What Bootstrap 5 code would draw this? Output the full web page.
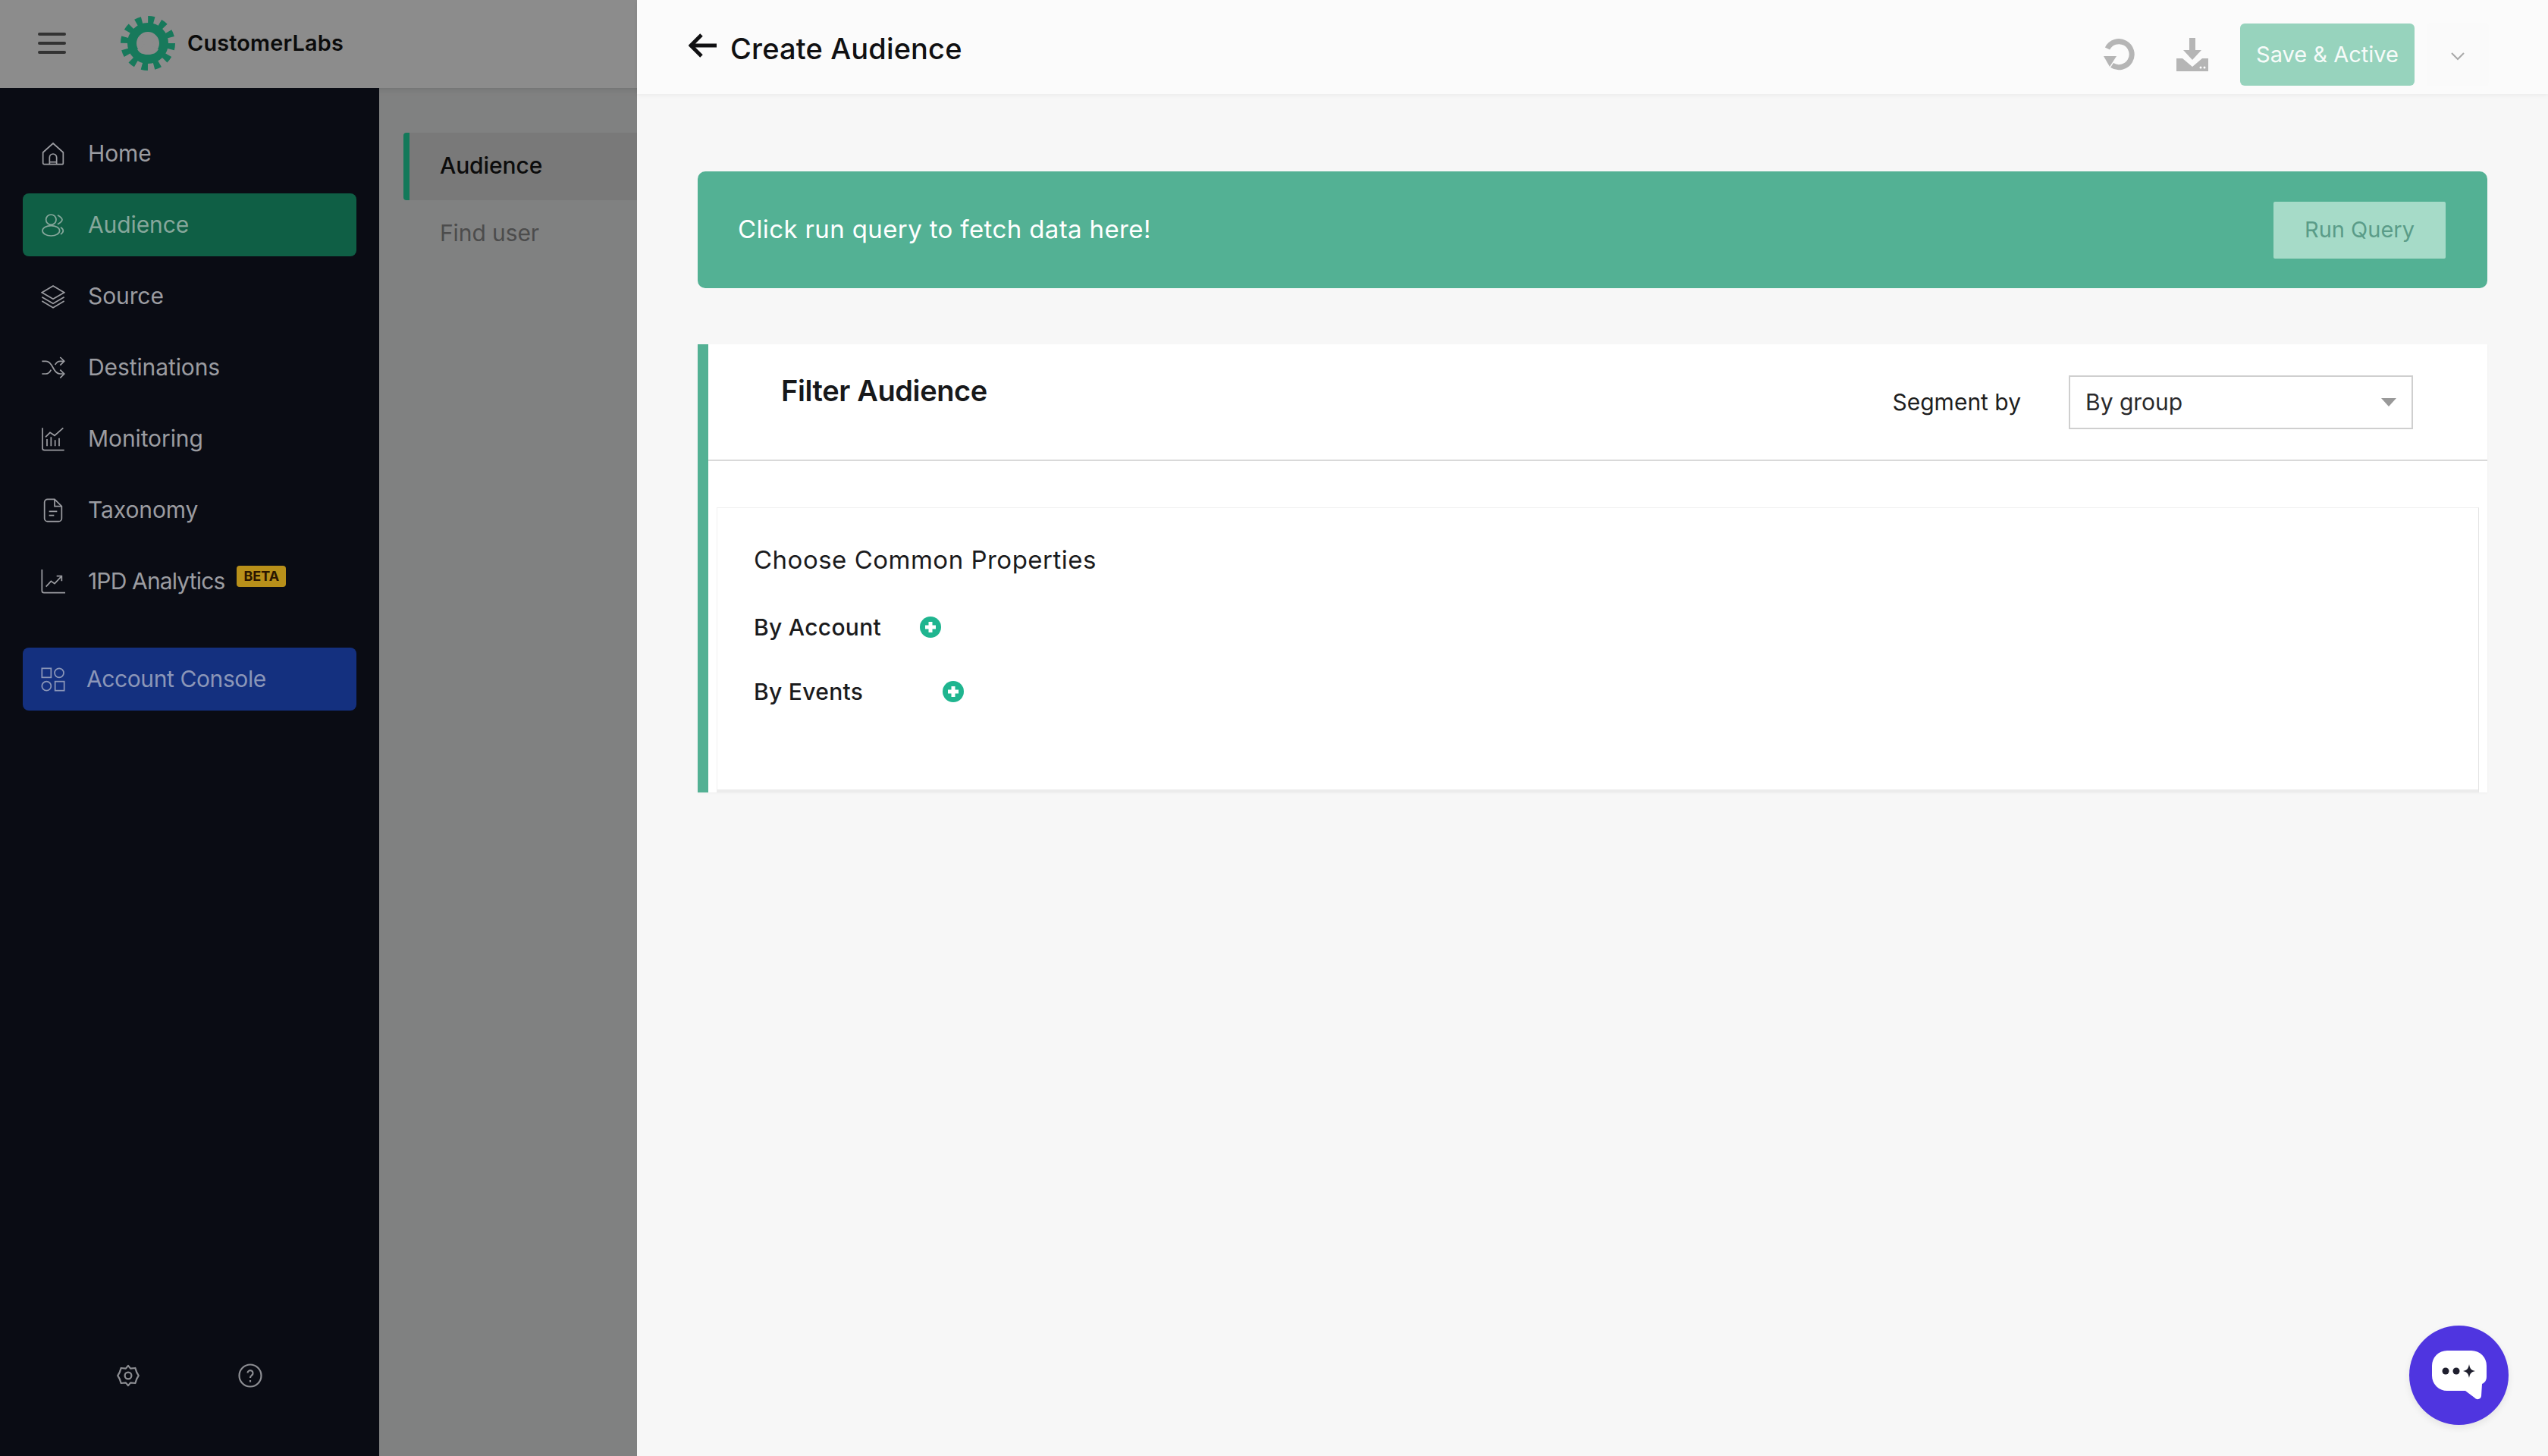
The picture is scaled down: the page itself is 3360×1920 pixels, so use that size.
<!DOCTYPE html>
<html lang="en">
<head>
    <meta charset="UTF-8">
    <meta name="viewport" content="width=device-width, initial-scale=1.0">
    <title>Create Audience</title>

    <link href="https://cdn.jsdelivr.net/npm/bootstrap@5.3.0/dist/css/bootstrap.min.css" rel="stylesheet">

    <style>
        html, body { height: 100%; }
        body {
            font-family: "Inter", "Liberation Sans", sans-serif;
            background: #f7f7f7;
            color: #1c1c1f;
            overflow: hidden;
        }
        .app { width: 3360px; height: 1920px; }
        .left-col { width: 840px; flex: none; }
        .brand-bar { height: 116px; background: #8c8c8c; padding: 0 0 3px 50px; }
        .burger { width: 37px; gap: 8px; }
        .burger span { display: block; height: 4px; border-radius: 2px; background: #333; }
        .logo { margin-left: 72px; }
        .brand-name { margin-left: 16px; font-size: 28.800px; font-weight: 600; color: #0b0b0b; letter-spacing: .2px; }

        .sidebar { width: 500px; flex: none; background: #0a0c14; padding: 45px 30px 90px; }
        .side-link {
            height: 83px;
            margin-bottom: 11px;
            padding: 0 0 0 24px;
            gap: 30px;
            border-radius: 8px;
            color: #9b9ca1;
            font-size: 30px;
            letter-spacing: -.1px;
        }
        .side-link svg { width: 32px; height: 32px; flex: none; }
        .side-link.active { background: #0f5f45; color: #86a79b; }
        .side-link.console { background: #14307f; color: #8b96b8; margin-top: 35px; letter-spacing: -.4px; gap: 28px; }
        .side-link.analytics { letter-spacing: -.85px; }
        .beta {
            margin: -14px 0 0 -14px;
            padding: 3px 9px;
            background: #b8901a;
            color: #2a1500;
            font-size: 18px;
            font-weight: 700;
            line-height: 22px;
            border-radius: 4px;
            letter-spacing: 0;
        }
        .side-foot { gap: 130px; color: #8d8e93; }

        .subnav { background: #808181; padding-top: 59px; box-shadow: inset 0 10px 8px -10px #6b6b6b; }
        .sub-link { height: 89px; padding: 0 0 2px 80px; font-size: 30px; color: #4c4c4c; letter-spacing: -.1px; }
        .sub-link.active { margin-left: 32px; background: #797979; border-left: 8px solid #13795a; padding-left: 40px; color: #0c0c0c; font-weight: 500; border-radius: 4px 0 0 4px; }

        .topbar { height: 124px; background: #fbfbfb; box-shadow: 0 2px 6px rgba(0,0,0,.05); padding: 0 78px 0 68px; }
        .back-arrow { margin-bottom: 4px; }
        .page-title { font-size: 38px; font-weight: 500; color: #101012; margin: 4px 0 0 17px; letter-spacing: .15px; }
        .top-tools { margin-top: 20px; }
        .btn-save {
            width: 230px; height: 82px;
            margin-left: 42px;
            background: #97d3bd;
            border: 0;
            border-radius: 6px;
            color: #f6fbf9;
            font-size: 29px;
        }
        .btn-more { width: 82px; height: 84px; margin-left: 16px; background: #fafafa; border: 0; padding: 0; }
        .tool { margin-left: 55px; }

        .content { padding: 102px 80px 0; }
        .banner { height: 154px; background: #53b194; border-radius: 10px; padding: 0 55px 0 53px; color: #fff; font-size: 33px; letter-spacing: .37px; }
        .btn-run {
            width: 227px; height: 75px;
            background: #a6dbc8;
            border: 0;
            border-radius: 2px;
            color: #5a9c88;
            font-size: 29px;
        }
        .filter-card {
            height: 591px;
            margin-top: 74px;
            border: 0;
            border-left: 14px solid #53b194;
            border-radius: 0;
            background: #fff;
            box-shadow: 0 1px 3px rgba(0,0,0,.04);
        }
        .filter-head { height: 155px; border-bottom: 2px solid #d9d9d9; padding: 0 98px 0 96px; }
        .filter-title { font-size: 38px; font-weight: 600; color: #17181a; margin: 38px 0 0; line-height: 46px; letter-spacing: -.4px; }
        .segment-label { font-size: 30px; color: #1e1e20; margin-right: 63px; }
        .form-select.segment {
            width: 454px; height: 71px;
            border: 2px solid #cfcfcf;
            border-radius: 0;
            padding: 0 20px;
            font-size: 30px;
            color: #2a2a2c;
            background-image: url("data:image/svg+xml,%3csvg xmlns='http://www.w3.org/2000/svg' viewBox='0 0 20 11'%3e%3cpath fill='%23999' d='M0 0h20L10 11z'/%3e%3c/svg%3e");
            background-position: right 20px center;
            background-size: 20px 11px;
        }
        .props {
            height: 377px;
            margin: 61px 11px 0 11px;
            padding: 41px 0 0 48px;
            border: 1px solid #f0f0f0;
            border-right-color: #e4e4e4;
            border-bottom: 4px solid #ececec;
        }
        .props h6 { font-size: 33px; font-weight: 400; line-height: 54px; margin: 0 0 35px; color: #1b1b1d; letter-spacing: .5px; }
        .prop-row { height: 54px; margin-bottom: 31px; font-size: 30px; font-weight: 500; color: #1b1b1d; letter-spacing: .3px; }
        .prop-row svg { width: 28px; height: 28px; }
        .prop-account { width: 219px; }
        .prop-events { width: 249px; }

        .chat {
            position: fixed;
            left: 3177px; top: 1748px;
            width: 131px; height: 131px;
            background: #4f35e0;
            box-shadow: 0 4px 10px rgba(0,0,0,.08);
        }
    </style>
</head>
<body>

<div class="app d-flex">

    <div class="left-col d-flex flex-column">
        <div class="brand-bar d-flex align-items-center">
            <div class="burger d-flex flex-column"><span></span><span></span><span></span></div>
            <svg class="logo" width="72" height="72" viewBox="-36 -36 72 72">
                <circle r="29.5" fill="none" stroke="#17795b" stroke-width="13" stroke-dasharray="7.7 7.74"/>
                <circle r="21" fill="none" stroke="#17795b" stroke-width="12"/>
                <circle cy="-5" r="8" fill="#8c8c8c"/>
                <path d="M-4-2h8l1 5 9 5c-3 5-7 7-14 7s-11-2-14-7l9-5Z" fill="#8c8c8c"/>
            </svg>
            <span class="brand-name">CustomerLabs</span>
        </div>

        <div class="d-flex flex-grow-1">
            <nav class="sidebar d-flex flex-column">
                <a class="side-link d-flex align-items-center text-decoration-none">
                    <svg viewBox="0 0 24 24" fill="none" stroke="currentColor" stroke-width="1.3"><path d="M2 10.5 12 1.5l10 9V21a1.3 1.3 0 0 1-1.3 1.3H3.3A1.3 1.3 0 0 1 2 21Z"/><path d="M8.5 22v-6.5a3.5 3.5 0 0 1 7 0V22"/><path d="M8.5 20h7"/></svg>
                    Home
                </a>
                <a class="side-link active d-flex align-items-center text-decoration-none">
                    <svg viewBox="0 0 24 24" fill="none" stroke="currentColor" stroke-width="1.3"><circle cx="10" cy="6.5" r="5"/><ellipse cx="10" cy="17.5" rx="8.5" ry="5"/><path d="M16.5 2c2.5 1.5 4.5 3 4.5 4.5S19 9.500 16.500 11"/><path d="M19.500 14c1.500 1 2.500 2.300 2.500 3.500s-1 2.500-2.500 3.500"/></svg>
                    Audience
                </a>
                <a class="side-link d-flex align-items-center text-decoration-none">
                    <svg viewBox="0 0 24 24" fill="none" stroke="currentColor" stroke-width="1.3"><path d="M12 1.500 23 8 12 14.500 1 8Z"/><path d="M1 12.500 12 19 23 12.500"/><path d="M1 16.500 12 23 23 16.500"/></svg>
                    Source
                </a>
                <a class="side-link d-flex align-items-center text-decoration-none">
                    <svg viewBox="0 0 24 24" fill="none" stroke="currentColor" stroke-width="1.3"><path d="M1 5.500h4c3.500 0 5.500 3.500 7 6.500s3.500 6 7 6h4"/><path d="M1 18h4c2.500 0 4-2 5-4M14 9c1-1.800 2.800-3.500 5-3.500h4"/><path d="M19 1.500 23 5.500 19 9.500M19 14 23 18 19 22"/></svg>
                    Destinations
                </a>
                <a class="side-link d-flex align-items-center text-decoration-none">
                    <svg viewBox="0 0 24 24" fill="none" stroke="currentColor" stroke-width="1.3"><path d="M1.500 1v20a2 2 0 0 0 2 2H23"/><path d="M6 19v-7M10 19v-9M14 19v-6M18 19v-8"/><path d="M4.500 10 9 5.500l4.500 3L22 1"/></svg>
                    Monitoring
                </a>
                <a class="side-link d-flex align-items-center text-decoration-none">
                    <svg viewBox="0 0 24 24" fill="none" stroke="currentColor" stroke-width="1.3"><path d="M13.500 1H6.500a3 3 0 0 0-3 3v16a3 3 0 0 0 3 3h11a3 3 0 0 0 3-3V8Z"/><path d="M13.500 1v7h7"/><path d="M8 13h8M8 17h5"/></svg>
                    Taxonomy
                </a>
                <a class="side-link analytics d-flex align-items-center text-decoration-none">
                    <svg viewBox="0 0 24 24" fill="none" stroke="currentColor" stroke-width="1.3"><path d="M1 0v21a2 2 0 0 0 2 2h21"/><path d="M5 17 10 11.500l3.500 2.500 6.500-7"/><path d="M15.500 6.500h5v5"/></svg>
                    1PD Analytics
                    <span class="beta">BETA</span>
                </a>
                <a class="side-link console d-flex align-items-center text-decoration-none">
                    <svg viewBox="0 0 24 24" fill="none" stroke="currentColor" stroke-width="1.3"><rect x="1" y="1" width="9" height="9"/><circle cx="18" cy="5.500" r="4.500"/><circle cx="5.500" cy="18.500" r="4.500"/><rect x="14" y="14" width="9" height="9"/></svg>
                    Account Console
                </a>
                <div class="side-foot d-flex justify-content-center align-items-center mt-auto">
                    <svg width="30" height="32" viewBox="0 0 24 24" fill="none" stroke="currentColor" stroke-width="1.800"><path d="M12 1.500 14.500 4.500 19.500 4 21 8.500 23 12 21 15.500 19.500 20 14.500 19.500 12 22.500 9.500 19.500 4.500 20 3 15.500 1 12 3 8.500 4.500 4 9.500 4.500Z" stroke-linejoin="round"/><circle cx="12" cy="12" r="3.500"/></svg>
                    <svg width="32" height="32" viewBox="0 0 32 32" fill="none" stroke="currentColor" stroke-width="2.200"><circle cx="16" cy="16" r="14.500"/><path d="M12.500 12.500a3.500 3.500 0 1 1 5.500 3c-1.300 1-2 1.700-2 3.500" /><path d="M16 22v2.500"/></svg>
                </div>
            </nav>

            <div class="subnav flex-grow-1">
                <div class="sub-link active d-flex align-items-center">Audience</div>
                <div class="sub-link d-flex align-items-center">Find user</div>
            </div>
        </div>
    </div>

    <main class="flex-grow-1 d-flex flex-column">
        <header class="topbar d-flex align-items-center">
            <svg class="back-arrow" width="38" height="32" viewBox="0 0 38 32" fill="none" stroke="#101012" stroke-width="5"><path d="M37 16H4M17 2 3 16l14 14"/></svg>
            <span class="page-title">Create Audience</span>
            <div class="top-tools d-flex align-items-center ms-auto">
                <svg class="tool" width="42" height="44" viewBox="0 0 42 44" fill="none"><path d="M6 14A17 17 0 1 1 12 36" stroke="#b5b5b5" stroke-width="7"/><path d="M1 24h17l-9 14Z" fill="#b5b5b5"/></svg>
                <svg class="tool" width="42" height="44" viewBox="0 0 42 44"><path d="M17 0h8v16h8L21 29 9 16h8Z" fill="#b5b5b5"/><path d="M0 27h8l13 11 13-11h8v17H0Z" fill="#b5b5b5"/><circle cx="32" cy="39" r="1.500" fill="#fff"/><circle cx="37" cy="39" r="1.500" fill="#fff"/></svg>
                <button class="btn btn-save" type="button">Save &amp; Active</button>
                <button class="btn btn-more" type="button">
                    <svg width="20" height="12" viewBox="0 0 20 12" fill="none" stroke="#a8a8a8" stroke-width="2"><path d="M2 2 10 10 18 2"/></svg>
                </button>
            </div>
        </header>

        <section class="content">
            <div class="banner d-flex align-items-center justify-content-between">
                <span>Click run query to fetch data here!</span>
                <button class="btn btn-run" type="button">Run Query</button>
            </div>

            <div class="card filter-card">
                <div class="filter-head d-flex justify-content-between align-items-center">
                    <h5 class="filter-title align-self-start">Filter Audience</h5>
                    <div class="d-flex align-items-center">
                        <span class="segment-label">Segment by</span>
                        <select class="form-select segment">
                            <option>By group</option>
                        </select>
                    </div>
                </div>
                <div class="props">
                    <h6>Choose Common Properties</h6>
                    <div class="prop-row d-flex align-items-center">
                        <span class="prop-account">By Account</span>
                        <svg viewBox="0 0 28 28"><circle cx="14" cy="14" r="14" fill="#1fb58f"/><path d="M14 7v14M7 14h14" stroke="#fff" stroke-width="5"/></svg>
                    </div>
                    <div class="prop-row d-flex align-items-center">
                        <span class="prop-events">By Events</span>
                        <svg viewBox="0 0 28 28"><circle cx="14" cy="14" r="14" fill="#1fb58f"/><path d="M14 7v14M7 14h14" stroke="#fff" stroke-width="5"/></svg>
                    </div>
                </div>
            </div>
        </section>
    </main>
</div>

<div class="chat rounded-circle d-flex align-items-center justify-content-center">
    <svg width="72" height="66" viewBox="0 0 72 66">
        <path d="M20 0h32a20 20 0 0 1 20 20v14c0 5-2 8-6 10l-1 16a5 5 0 0 1-9 2L44 53H20A20 20 0 0 1 0 33V20A20 20 0 0 1 20 0Z" fill="#fff"/>
        <circle cx="18" cy="27" r="4.500" fill="#1f1f2e"/>
        <circle cx="32" cy="27" r="4.500" fill="#1f1f2e"/>
        <path d="M49 18c1 6 3 8 8 9-5 1-7 3-8 9-1-6-3-8-8-9 5-1 7-3 8-9Z" fill="#1f1f2e"/>
    </svg>
</div>

<script src="https://cdn.jsdelivr.net/npm/bootstrap@5.3.0/dist/js/bootstrap.bundle.min.js"></script>
</body>
</html>
